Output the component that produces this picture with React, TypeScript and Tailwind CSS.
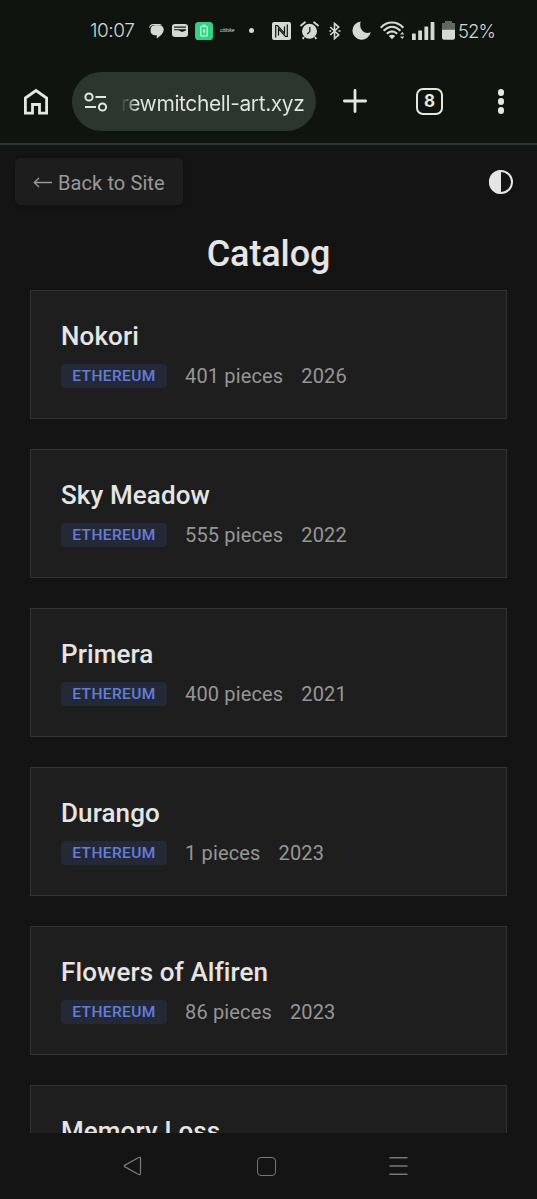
type Collection = {
  name: string;
  chain?: string;
  pieces?: number;
  year?: number;
};

const collections: Collection[] = [
  { name: "Nokori", chain: "Ethereum", pieces: 401, year: 2026 },
  { name: "Sky Meadow", chain: "Ethereum", pieces: 555, year: 2022 },
  { name: "Primera", chain: "Ethereum", pieces: 400, year: 2021 },
  { name: "Durango", chain: "Ethereum", pieces: 1, year: 2023 },
  { name: "Flowers of Alfiren", chain: "Ethereum", pieces: 86, year: 2023 },
  { name: "Memory Loss" },
];

function StatusBar() {
  return (
    <div className="flex h-[61px] shrink-0 items-center pl-[90px] text-[#d5d8d3]">
      <span className="mt-[2px] w-[59px] font-['Inter',sans-serif] text-[19px] font-light tracking-[-0.45px] whitespace-nowrap">
        10:07
      </span>

      {/* Notifications */}
      <svg className="h-[18px] w-[15px] shrink-0" viewBox="0 0 15 18" fill="currentColor">
        <path d="M5 3.300h5.200c2.700 0 4.500 1.700 4.500 4.300 0 3.400-3.200 6.700-7 9v-3.300H6.300c-3 0-4.800-1.900-4.800-4.800 0-3.200 1.400-5.200 3.500-5.200z" />
        <path d="M.2 5.600C.3 3.300 1.800 1.900 4 1.900h5.500c1.500 0 2.800.4 3.700 1.300H5.300C2.900 3.200 1.300 4.200.9 6.300z" />
        <path d="M1 6.600C1.400 4.300 2.600 3.300 5 3.200" stroke="#0f150e" strokeWidth=".5" fill="none" />
      </svg>
      <svg className="ml-2 h-[13px] w-4 shrink-0" viewBox="0 0 16 13">
        <rect width="16" height="13" rx="3" fill="currentColor" />
        <path d="M2 3.100h12" stroke="#0f150e" strokeWidth="1.200" />
        <path d="M2 5.200h12v1.200c-1.600 0-2.800 1.600-4.600 1.300C7.900 7.300 7.600 6.300 6 6.300H2z" fill="#0f150e" />
      </svg>
      <svg className="ml-[7px] h-[18px] w-[18px] shrink-0" viewBox="0 0 18 18" fill="none">
        <rect width="18" height="18" rx="3.600" fill="#2bd582" />
        <rect x="5.800" y="4.200" width="6.400" height="9.800" rx="1.300" stroke="#d9f7e7" strokeWidth="1.100" />
        <path d="M7.400 3.300h3.200" stroke="#d9f7e7" strokeWidth="1.300" />
        <path d="m9.500 6-2 3.400h1.300v2.800l2-3.500H9.500z" fill="#d9f7e7" />
      </svg>
      <span className="ml-[7px] w-4 font-['Liberation_Sans',sans-serif] text-[5px] tracking-[-0.1px] italic">
        citibike
      </span>
      <span className="ml-[13px] h-[5px] w-[5px] shrink-0 rounded-full bg-[#d5d8d3]" />

      {/* System icons */}
      <svg className="ml-[18px] h-[18px] w-[19px] shrink-0" viewBox="0 0 19 18">
        <rect width="19" height="18" rx="2" fill="currentColor" />
        <path d="M3.700 15.500V3.500h1.800l7 7.700V4.500" stroke="#0f150e" strokeWidth="1.200" fill="none" />
        <path d="M15.300 2.500v12h-1.800l-7-7.700v6.700" stroke="#0f150e" strokeWidth="1.200" fill="none" />
      </svg>
      <svg className="ml-[9px] h-[19px] w-[19px] shrink-0" viewBox="0 0 19 19" fill="none">
        <circle cx="9.500" cy="10.300" r="7.500" fill="currentColor" />
        <path d="M1 4.500 5 1.300M18 4.500l-4-3.200" stroke="currentColor" strokeWidth="1.800" strokeLinecap="round" />
        <path d="m4 16-1.300 2M15 16l1.300 2" stroke="currentColor" strokeWidth="1.800" />
        <path d="M9.800 6v4.600l-2.600 2.600" stroke="#0f150e" strokeWidth="1.200" />
      </svg>
      <svg className="ml-[10px] h-[18px] w-3 shrink-0" viewBox="0 0 12 18" fill="none" stroke="currentColor" strokeWidth="1.600">
        <path d="m1.200 5 8.500 7.900-4.200 3.700V1.400l4.200 3.700L1.200 13" />
        <path d="M.3 9h1.800M9.500 9h2" />
      </svg>
      <svg className="ml-[11px] h-[19px] w-[19px] shrink-0" viewBox="0 0 19 19" fill="currentColor">
        <path d="M8.700.4A9.200 9.200 0 1 0 18.700 11C14 14.200 6.100 9.200 8.700.4z" />
      </svg>
      <svg className="ml-[9px] h-[19px] w-[26px] shrink-0" viewBox="0 0 26 19" fill="none" stroke="currentColor" strokeWidth="2.100">
        <path d="M.7 6.700C7.200-.2 16.500-.2 23.400 6.700" />
        <path d="M3.600 9.800C9 4.600 15 4.600 20.500 9.800" />
        <path d="M6.800 12.800c3.300-3 7.100-3 10.400 0" />
        <path d="M8.800 15.100c2-1.700 4.500-1.700 6.400 0L12 18.300z" fill="currentColor" stroke="none" />
        <path d="m20.100 13.600 2.100-2.600 2.100 2.600zM20.100 15.400l2.100 2.600 2.100-2.600z" fill="currentColor" stroke="none" />
      </svg>
      <svg className="ml-[6px] h-[18px] w-[23px] shrink-0" viewBox="0 0 23 18" fill="currentColor">
        <rect x="0" y="11.500" width="3.800" height="6.500" rx=".5" />
        <rect x="6.200" y="8.500" width="3.800" height="9.500" rx=".5" />
        <rect x="12.400" y="4.500" width="3.800" height="13.500" rx=".5" />
        <rect x="18.600" y="0" width="3.800" height="18" rx=".5" />
      </svg>
      <svg className="ml-[7px] h-[19px] w-[13px] shrink-0" viewBox="0 0 13 19">
        <path d="M3 0h7v2h3v7H0V2h3z" fill="#616661" />
        <path d="M0 8.700h13v8a2 2 0 0 1-2 2H2a2 2 0 0 1-2-2z" fill="currentColor" />
      </svg>
      <span className="mt-[2px] ml-[3px] font-['Inter',sans-serif] text-[18.500px] font-light tracking-[-0.9px]">
        52%
      </span>
    </div>
  );
}

function BrowserBar() {
  return (
    <div className="flex h-[84px] shrink-0 items-start border-b-2 border-[#2b352d] pt-[11px] pl-[23px] text-[#e1e8dd]">
      <svg className="mt-[14px] h-[29px] w-[26px] shrink-0" viewBox="0 0 26 29" fill="none" stroke="currentColor" strokeWidth="2.800">
        <path d="M2.400 12 13 4.500l10.600 7.500v15.200h-7.100v-8.700h-7v8.700H2.400z" />
      </svg>

      {/* Address field */}
      <div className="ml-[23px] flex h-[59px] w-[244px] shrink-0 items-center rounded-full bg-[#2d362e] pl-3">
        <svg className="h-[20px] w-[24px] shrink-0" viewBox="0 0 24 20" fill="none" stroke="currentColor" strokeWidth="2">
          <circle cx="5" cy="5" r="3.600" />
          <path d="M11.500 5H22M1 15h11" />
          <circle cx="18.500" cy="15" r="3.600" />
        </svg>
        <span className="mt-[5px] ml-[13px] bg-linear-to-r from-[#2d362e] to-[#e1e8dd] to-[16px] bg-clip-text font-['Inter',sans-serif] text-[21px] leading-8 tracking-[-0.400px] whitespace-nowrap text-transparent">
          rewmitchell-art.xyz
        </span>
      </div>

      <svg className="mt-[17px] ml-[27px] h-6 w-6 shrink-0" viewBox="0 0 24 24" stroke="currentColor" strokeWidth="2.800" strokeLinecap="round">
        <path d="M12 1.400v21.200M1.400 12h21.200" />
      </svg>
      <div className="mt-4 ml-[49px] flex h-[27px] w-[27px] shrink-0 items-center justify-center rounded-[7px] border-2 border-[#e1e8dd] font-['Inter',sans-serif] text-[17px] leading-none font-bold">
        8
      </div>
      <div className="mt-[17px] ml-[54.500px] flex flex-col gap-[2.500px]">
        <span className="h-[6.500px] w-[6.500px] rounded-full bg-[#e1e8dd]" />
        <span className="h-[6.500px] w-[6.500px] rounded-full bg-[#e1e8dd]" />
        <span className="h-[6.500px] w-[6.500px] rounded-full bg-[#e1e8dd]" />
      </div>
    </div>
  );
}

function CollectionCard({ collection }: { collection: Collection }) {
  return (
    <div className="h-[129px] shrink-0 border border-[#333333] bg-[#1e1e1e] px-[30px] pt-[28px]">
      <h2 className="text-[26px] leading-[34px] font-medium tracking-[0.100px] text-[#e5e5e5]">{collection.name}</h2>
      {collection.chain && (
        <div className="mt-[11px] flex items-center gap-[18px] text-[20px] leading-6 tracking-[0.150px] text-[#969696]">
          <span className="flex h-6 w-[106px] items-center justify-center rounded-[4px] bg-[#242936] text-[15.500px] font-medium tracking-[0.400px] text-[#647ddd] uppercase">
            {collection.chain}
          </span>
          <span>{collection.pieces} pieces</span>
          <span>{collection.year}</span>
        </div>
      )}
    </div>
  );
}

function NavigationBar() {
  return (
    <div className="flex h-[66px] shrink-0 items-center pl-[123px] text-[#777777]">
      <svg className="h-5 w-5" viewBox="0 0 20 20" fill="none" stroke="currentColor" strokeWidth="1.300" strokeLinejoin="round">
        <path d="M15.700 1.500Q17.500.9 17.500 2.400v15.200q0 1.500-1.800.9L2 10.900Q.5 10 2 9.100z" />
      </svg>
      <span className="ml-[114px] h-[19px] w-[19px] rounded-[4px] border border-[#777777]" />
      <svg className="ml-[113px] h-5 w-[19px]" viewBox="0 0 19 20" stroke="currentColor" strokeWidth="1.500">
        <path d="M.5 1.700h18M.5 10h18M.5 18.300h18" />
      </svg>
    </div>
  );
}

export default function App() {
  return (
    <div className="flex h-[1199px] w-[537px] flex-col overflow-hidden bg-[#141414] font-['Roboto',sans-serif]">
      <header className="bg-[#0f150e]">
        <StatusBar />
        <BrowserBar />
      </header>

      <main className="flex h-[988px] shrink-0 flex-col overflow-hidden">
        <div className="flex items-start justify-between pt-[13px] pr-6 pl-[15px]">
          <button className="flex h-[47px] w-[168px] items-center gap-[5px] rounded-[5px] bg-[#1d1d1d] pt-[2px] pl-[18px] text-[20px] tracking-[0.100px] text-[#999999] shadow-[0_1px_4px_rgba(0,0,0,0.25)]">
            <svg className="h-3 w-5 shrink-0" viewBox="0 0 20 12" fill="none" stroke="currentColor" strokeWidth="1.300">
              <path d="M19 5.500H1.500M6 1 1.300 5.500 6 10" />
            </svg>
            <span className="whitespace-nowrap">Back to Site</span>
          </button>
          <svg className="mt-[12px] h-6 w-6" viewBox="0 0 24 24">
            <circle cx="12" cy="12" r="11" fill="none" stroke="#e5e5e5" strokeWidth="2" />
            <path d="M12 0a12 12 0 0 0 0 24z" fill="#e5e5e5" />
          </svg>
        </div>

        <h1 className="mt-[26px] text-center text-[36px] leading-[46px] font-medium tracking-[-0.100px] text-[#e5e5e5]">
          Catalog
        </h1>

        {/* Collections */}
        <div className="mt-[13px] flex flex-col gap-[30px] px-[30px]">
          {collections.map((collection) => (
            <CollectionCard key={collection.name} collection={collection} />
          ))}
        </div>
      </main>

      <NavigationBar />
    </div>
  );
}
